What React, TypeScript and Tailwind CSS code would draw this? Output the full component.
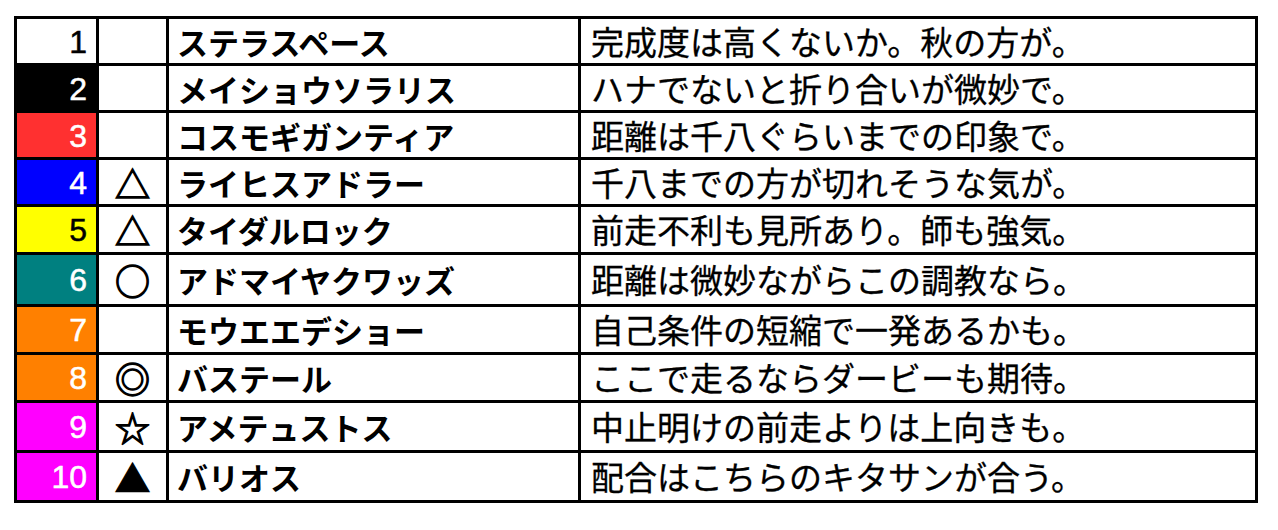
import React from "react";

type Row = {
  n: string;
  bg: string;
  fg: string;
  h: string;
  mark: string;
  name: string;
  note: string;
};

const rows: Row[] = [
  { n: "1", bg: "bg-white", fg: "text-black", h: "h-[47px] border-b-[3px]", mark: "", name: "ステラスペース", note: "完成度は高くないか。秋の方が。" },
  { n: "2", bg: "bg-black", fg: "text-white", h: "h-[47px] border-b-[3px]", mark: "", name: "メイショウソラリス", note: "ハナでないと折り合いが微妙で。" },
  { n: "3", bg: "bg-[#ff3030]", fg: "text-white", h: "h-[47px] border-b-[3px]", mark: "", name: "コスモギガンティア", note: "距離は千八ぐらいまでの印象で。" },
  { n: "4", bg: "bg-[#0000ff]", fg: "text-white", h: "h-[47px] border-b-[3px]", mark: "△", name: "ライヒスアドラー", note: "千八までの方が切れそうな気が。" },
  { n: "5", bg: "bg-[#ffff00]", fg: "text-black", h: "h-[48px] border-b-[3px]", mark: "△", name: "タイダルロック", note: "前走不利も見所あり。師も強気。" },
  { n: "6", bg: "bg-[#008080]", fg: "text-white", h: "h-[52px] border-b-[3px]", mark: "○", name: "アドマイヤクワッズ", note: "距離は微妙ながらこの調教なら。" },
  { n: "7", bg: "bg-[#ff8000]", fg: "text-white", h: "h-[48px] border-b-[3px]", mark: "", name: "モウエエデショー", note: "自己条件の短縮で一発あるかも。" },
  { n: "8", bg: "bg-[#ff8000]", fg: "text-white", h: "h-[48px] border-b-[3px]", mark: "◎", name: "バステール", note: "ここで走るならダービーも期待。" },
  { n: "9", bg: "bg-[#ff00ff]", fg: "text-white", h: "h-[50px] border-b-[3px]", mark: "☆", name: "アメテュストス", note: "中止明けの前走よりは上向きも。" },
  { n: "10", bg: "bg-[#ff00ff]", fg: "text-white", h: "h-[47px]", mark: "▲", name: "バリオス", note: "配合はこちらのキタサンが合う。" },
];

export default function App() {
  return (
    <div className="w-[1278px] h-[530px] bg-white pt-[16px] pl-[14px]">
      <div className="w-[1244px] border-[3px] border-black bg-white [font-family:'Noto_Sans_CJK_JP',sans-serif]">
        {rows.map((r) => (
          <div
            key={r.n}
            className={`grid grid-cols-[82px_70px_412px_1fr] border-black ${r.h}`}
          >
            <div
              className={`${r.bg} ${r.fg} border-r-[3px] border-black flex items-center justify-end pr-[9px] pt-[1px] text-[32px] leading-none [font-family:'Liberation_Sans',sans-serif] [-webkit-text-stroke:0.5px_currentcolor]`}
            >
              {r.n}
            </div>
            <div className="border-r-[3px] border-black flex items-center justify-center text-[35px] leading-none text-black [-webkit-text-stroke:1.3px_black]">
              {r.mark}
            </div>
            <div className="border-r-[3px] border-black flex items-center pl-[8px] text-[31px] font-semibold leading-none text-black whitespace-nowrap">
              {r.name}
            </div>
            <div className="flex items-center pl-[10px] text-[33px] leading-none text-black whitespace-nowrap [-webkit-text-stroke:0.3px_black]">
              {r.note}
            </div>
          </div>
        ))}
      </div>
    </div>
  );
}
